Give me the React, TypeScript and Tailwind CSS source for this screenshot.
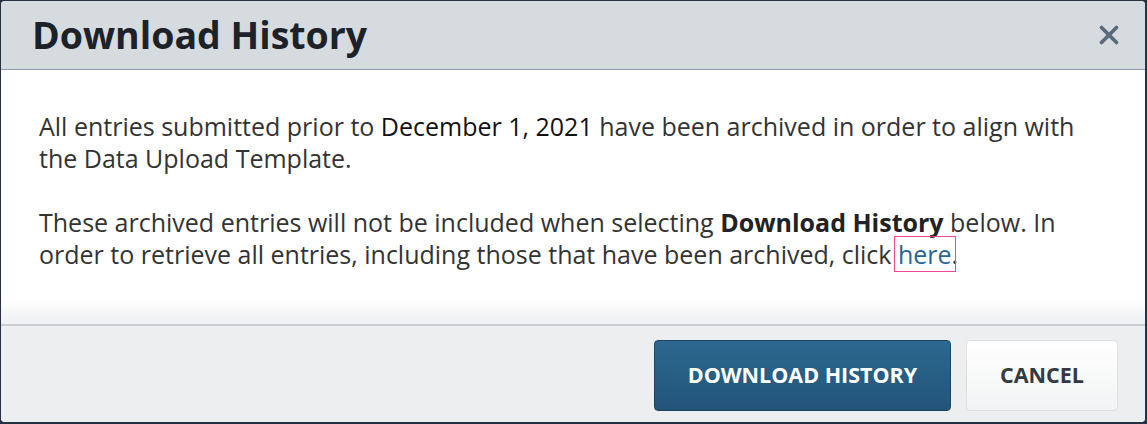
import { X } from "lucide-react";

const DownloadHistoryModal = () => {
  return (
    <div className="flex h-full flex-col overflow-hidden rounded-[4px] bg-white">
      <div className="flex h-[69px] shrink-0 items-center justify-between border-b border-[#8e9aa8] bg-[#d6dbe0] pl-[31px] pr-[21px]">
        <h1 className="text-[37.5px] font-bold leading-none text-[#1d2229]">Download History</h1>
        <button className="text-[#5b6b7b]">
          <X size={30} strokeWidth={3} />
        </button>
      </div>

      <div className="flex-1 bg-[linear-gradient(to_bottom,#ffffff_90%,#eff0f2_100%)] pl-[38px] pr-[30px] pt-[40px] text-[25px] leading-[32px] text-[#333]">
        <p>
          All entries submitted prior to <span className="text-[#111]">December 1, 2021</span> have been archived in order to align with the Data Upload Template.
        </p>
        <p className="mt-[32px]">
          These archived entries will not be included when selecting <strong className="font-bold text-[#222]">Download History</strong> below. In order to retrieve all entries, including those that have been archived, click{" "}
          <a className="-mx-[3px] px-[3px] text-[#2a6496] outline outline-1 outline-[#f0439a]">here</a>.
        </p>
      </div>

      <div className="flex h-[98px] shrink-0 items-start justify-end gap-[15px] border-t-2 border-[#c9cdd2] bg-[#edeef0] pr-[27px] pt-[14px]">
        <button className="h-[71px] w-[297px] rounded-[4px] border border-[#1c4563] bg-[linear-gradient(to_bottom,#2c6890,#225478)] text-[21.5px] font-bold text-white">
          DOWNLOAD HISTORY
        </button>
        <button className="h-[71px] w-[152px] rounded-[4px] border border-[#dde0e3] bg-[linear-gradient(to_bottom,#ffffff,#f2f3f4)] text-[21.5px] font-bold text-[#343a40]">
          CANCEL
        </button>
      </div>
    </div>
  );
};

const App = () => {
  return (
    <div className="h-[424px] w-[1147px] bg-[#263244] pb-[2px] pl-px pr-[2px] pt-px font-['Open_Sans',sans-serif]">
      <DownloadHistoryModal />
    </div>
  );
};

export default App;
